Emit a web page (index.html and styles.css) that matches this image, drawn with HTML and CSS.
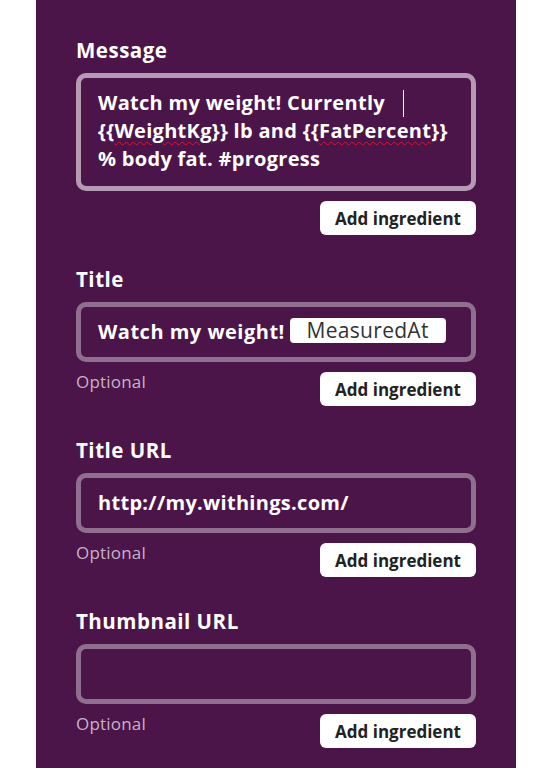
FILE: index.html
```html
<!DOCTYPE html>
<html lang="en">
<head>
<meta charset="utf-8">
<title>Action fields</title>
<link rel="stylesheet" href="styles.css">
</head>
<body>
<div class="panel">
  <section class="field">
    <h3 class="label">Message</h3>
    <div class="box box-focus box-multi">Watch my weight! Currently<span class="caret"></span> {{<span class="spell">WeightKg</span>}} lb and {{<span class="spell">FatPercent</span>}} % body fat. #progress</div>
    <div class="meta meta-end">
      <button class="add">Add ingredient</button>
    </div>
  </section>
  <section class="field">
    <h3 class="label">Title</h3>
    <div class="box box-title">Watch my weight! <span class="pill">MeasuredAt</span></div>
    <div class="meta">
      <span class="optional">Optional</span>
      <button class="add">Add ingredient</button>
    </div>
  </section>
  <section class="field">
    <h3 class="label">Title URL</h3>
    <div class="box">http://my.withings.com/</div>
    <div class="meta">
      <span class="optional">Optional</span>
      <button class="add">Add ingredient</button>
    </div>
  </section>
  <section class="field">
    <h3 class="label">Thumbnail URL</h3>
    <div class="box"></div>
    <div class="meta">
      <span class="optional">Optional</span>
      <button class="add">Add ingredient</button>
    </div>
  </section>
</div>
</body>
</html>
```
FILE: styles.css
```css
* { box-sizing: border-box; }
html, body { margin: 0; padding: 0; background: #ffffff; }
body { font-family: "Open Sans", Lato, sans-serif; }

.panel {
  margin-left: 36px;
  width: 480px;
  min-height: 768px;
  background: #4b1549;
  padding: 38px 40px 0;
  color: #ffffff;
}

.field { margin-bottom: 32px; }

.label {
  margin: 0 0 11px;
  font-size: 20.5px;
  line-height: 24px;
  font-weight: 700;
  letter-spacing: 0.5px;
  color: #ffffff;
}

.box {
  height: 60px;
  border: 5px solid #8e6f8d;
  border-radius: 10px;
  padding: 11px 17px;
  font-size: 20px;
  line-height: 28px;
  font-weight: 700;
  letter-spacing: 0.3px;
  color: #ffffff;
  white-space: nowrap;
}
.box-title { letter-spacing: 0.5px; }
.box-focus { border-color: #b49bb3; }
.box-multi {
  height: 118px;
  white-space: normal;
  padding: 11px 17px 13px 17px;
}

.caret {
  display: inline-block;
  width: 1px;
  height: 27px;
  background: #ffffff;
  margin-left: 18px;
  vertical-align: -7px;
}

.spell {
  text-decoration: underline wavy #e0102a;
  text-decoration-thickness: 1px;
  text-underline-offset: 3px;
}

.pill {
  display: inline-block;
  background: #ffffff;
  color: #333333;
  font-size: 21px;
  font-weight: 400;
  letter-spacing: 0.3px;
  border-radius: 4px;
  padding: 0 17px;
  height: 25px;
  line-height: 25px;
  margin-left: -1px;
  vertical-align: 1px;
}

.meta {
  display: flex;
  justify-content: space-between;
  align-items: flex-start;
  margin-top: 10px;
}
.meta-end { justify-content: flex-end; }

.optional {
  font-size: 17px;
  line-height: 20px;
  letter-spacing: 0.2px;
  color: #c7b3c6;
}

.add {
  font-family: inherit;
  width: 156px;
  height: 34px;
  border: none;
  border-radius: 6px;
  background: #ffffff;
  color: #222222;
  font-size: 17px;
  font-weight: 700;
  padding: 0;
  cursor: pointer;
}
```
